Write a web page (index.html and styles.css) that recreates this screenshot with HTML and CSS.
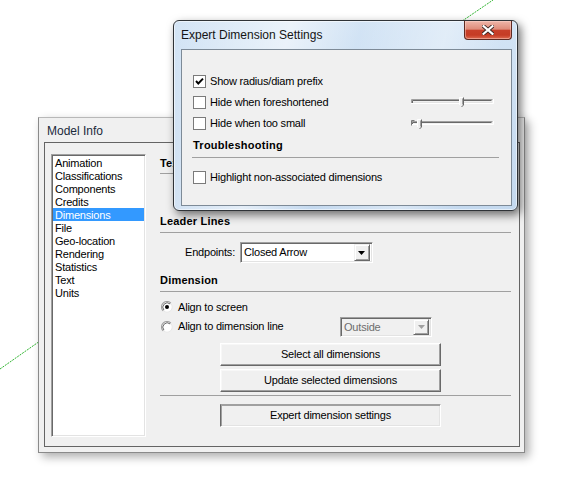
FILE: index.html
```html
<!DOCTYPE html>
<html>
<head>
<meta charset="utf-8">
<title>Expert Dimension Settings</title>
<link rel="stylesheet" href="styles.css">
</head>
<body>
<div class="desk">
  <svg class="lines" width="566" height="480" viewBox="0 0 566 480">
    <line x1="0" y1="369" x2="80" y2="313" stroke="#2fb52f" stroke-width="1" stroke-dasharray="2 1"/>
    <line x1="430" y1="43" x2="493" y2="0" stroke="#2fb52f" stroke-width="1" stroke-dasharray="2 1"/>
  </svg>

  <div class="win-model">
    <div class="model-title">Model Info</div>
    <div class="panel">
      <div class="list">
        <div class="item">Animation</div>
        <div class="item">Classifications</div>
        <div class="item">Components</div>
        <div class="item">Credits</div>
        <div class="item selected">Dimensions</div>
        <div class="item">File</div>
        <div class="item">Geo-location</div>
        <div class="item">Rendering</div>
        <div class="item">Statistics</div>
        <div class="item">Text</div>
        <div class="item">Units</div>
      </div>
      <div class="col">
        <div class="hd hd-text">Text</div>
        <div class="sep sep-text"></div>
        <div class="hd hd-leader">Leader Lines</div>
        <div class="sep sep-leader"></div>
        <div class="endpoints">
          <span class="ep-label">Endpoints:</span>
          <div class="combo">
            <span class="combo-text">Closed Arrow</span>
            <span class="combo-btn">
              <svg width="7" height="4" viewBox="0 0 7 4"><path d="M0 0H7L3.5 4Z" fill="#000"/></svg>
            </span>
          </div>
        </div>
        <div class="hd hd-dim">Dimension</div>
        <div class="sep sep-dim"></div>
        <div class="radio-row r1">
          <svg class="radio" width="12" height="12" viewBox="0 0 12 12">
            <circle cx="6" cy="6" r="5.2" fill="#fff" stroke="#e8e8e8"/>
            <path d="M2.1 9.9A5.5 5.5 0 0 1 9.9 2.1" fill="none" stroke="#a0a0a0" stroke-width="1.1"/>
            <path d="M2.9 9.1A4.4 4.4 0 0 1 9.1 2.9" fill="none" stroke="#6a6a6a" stroke-width="1"/>
            <circle cx="6" cy="6" r="2" fill="#000"/>
          </svg>
          <span class="rlabel">Align to screen</span>
        </div>
        <div class="radio-row r2">
          <svg class="radio" width="12" height="12" viewBox="0 0 12 12">
            <circle cx="6" cy="6" r="5.2" fill="#fff" stroke="#e8e8e8"/>
            <path d="M2.1 9.9A5.5 5.5 0 0 1 9.9 2.1" fill="none" stroke="#a0a0a0" stroke-width="1.1"/>
            <path d="M2.9 9.1A4.4 4.4 0 0 1 9.1 2.9" fill="none" stroke="#6a6a6a" stroke-width="1"/>
          </svg>
          <span class="rlabel">Align to dimension line</span>
          <div class="combo combo-dis">
            <span class="combo-text">Outside</span>
            <span class="combo-btn">
              <svg width="7" height="4" viewBox="0 0 7 4"><path d="M0 0H7L3.5 4Z" fill="#a0a0a0"/></svg>
            </span>
          </div>
        </div>
        <div class="btn b1">Select all dimensions</div>
        <div class="btn b2">Update selected dimensions</div>
        <div class="sep sep-btn"></div>
        <div class="btn btn-pressed b3">Expert dimension settings</div>
      </div>
    </div>
  </div>

  <div class="aero">
    <div class="aero-bar">
      <span class="aero-title">Expert Dimension Settings</span>
      <span class="close">
        <svg width="12" height="10" viewBox="0 0 12 10">
          <path d="M1.5 1.2L10.5 8.8M10.5 1.2L1.5 8.8" stroke="#3b2622" stroke-width="4" stroke-linecap="square"/>
          <path d="M1.5 1.2L10.5 8.8M10.5 1.2L1.5 8.8" stroke="#fff" stroke-width="2.2" stroke-linecap="square"/>
        </svg>
      </span>
    </div>
    <div class="client">
      <div class="crow c1">
        <span class="chk">
          <svg width="11" height="11" viewBox="0 0 11 11"><path d="M2 5L4.3 7.5L9 2.6" fill="none" stroke="#000" stroke-width="1.9"/></svg>
        </span>
        <span class="clabel">Show radius/diam prefix</span>
      </div>
      <div class="crow c2">
        <span class="chk"></span>
        <span class="clabel">Hide when foreshortened</span>
        <svg class="slider" width="84" height="13" viewBox="0 0 84 13">
          <path d="M1.5 8V3.5H82.5" fill="none" stroke="#a0a0a0"/>
          <path d="M2.5 7V4.5H81.5" fill="none" stroke="#696969"/>
          <path d="M1 7.5H83.5V3" fill="none" stroke="#fff"/>
          <path d="M3 6.5H82" stroke="#e3e3e3"/>
          <path d="M49.5 1.5H53.5V9L51.5 11L49.5 9Z" fill="#f0f0f0"/>
          <path d="M49.5 9V1.5H53" fill="none" stroke="#fff"/>
          <path d="M53.5 1.5V9L51.5 11" fill="none" stroke="#696969"/>
          <path d="M52.5 2.5V8.5" stroke="#a0a0a0"/>
        </svg>
      </div>
      <div class="crow c3">
        <span class="chk"></span>
        <span class="clabel">Hide when too small</span>
        <svg class="slider" width="84" height="13" viewBox="0 0 84 13">
          <path d="M1.5 8V4.5H82.5" fill="none" stroke="#a0a0a0"/>
          <path d="M2.5 7V5.5H81.5" fill="none" stroke="#696969"/>
          <path d="M1 7.5H83.5V4" fill="none" stroke="#fff"/>
          <path d="M4.5 3.5H1.5V8.5" fill="none" stroke="#7a7a7a"/>
          <path d="M7.5 2.5H11.5V10L9.5 12L7.5 10Z" fill="#f0f0f0"/>
          <path d="M7.5 10V2.5H11" fill="none" stroke="#fff"/>
          <path d="M11.5 2.5V10L9.5 12" fill="none" stroke="#696969"/>
          <path d="M10.5 3.5V9.5" stroke="#a0a0a0"/>
        </svg>
      </div>
      <div class="chd">Troubleshooting</div>
      <div class="csep"></div>
      <div class="crow c4">
        <span class="chk"></span>
        <span class="clabel">Highlight non-associated dimensions</span>
      </div>
    </div>
  </div>
</div>
</body>
</html>
```

FILE: styles.css
```css
* { box-sizing: border-box; }
html, body { margin: 0; padding: 0; background: #fff; }
body {
  font: 11px/13px "Liberation Sans", Arial, sans-serif;
  letter-spacing: -0.2px;
  color: #000;
}
.desk {
  position: relative;
  width: 566px;
  height: 480px;
  overflow: hidden;
  background: #fff;
}
.lines { position: absolute; left: 0; top: 0; }

/* ---------- Model Info window ---------- */
.win-model {
  position: absolute;
  left: 38px;
  top: 117px;
  width: 487px;
  height: 336px;
  background: #f0f0f0;
  border: 1px solid #8a8a8a;
  border-top-color: #b8b8b8;
  box-shadow: 4px 4px 9px rgba(0,0,0,0.32);
  display: flex;
  flex-direction: column;
}
.model-title {
  height: 24px;
  line-height: 27px;
  padding-left: 8px;
  font-size: 12px;
  letter-spacing: 0;
  color: #1b2a3c;
}
.panel {
  margin-left: 5px;
  width: 476px;
  height: 305px;
  border: 1px solid #646464;
  display: flex;
  align-items: flex-start;
  padding: 11px 0 0 6px;
}
.list {
  width: 95px;
  height: 283px;
  background: #fff;
  border-top: 1px solid #a0a0a0;
  border-left: 1px solid #a0a0a0;
  border-right: 1px solid #fff;
  border-bottom: 1px solid #fff;
  box-shadow: inset 1px 1px 0 #696969, inset -1px -1px 0 #e3e3e3;
  padding: 1px 1px 0 1px;
}
.item {
  height: 13px;
  line-height: 14px;
  padding-left: 2px;
  white-space: nowrap;
}
.item.selected { background: #3399ff; color: #fff; }

.col {
  margin-left: 14px;
  width: 351px;
  display: flex;
  flex-direction: column;
}
.hd {
  height: 14px;
  line-height: 14px;
  font-weight: bold;
  letter-spacing: 0.2px;
}
.sep {
  height: 1px;
  background: #a0a0a0;
}
.hd-text { margin-top: 2px; }
.sep-text { margin-top: 3px; }
.hd-leader { margin-top: 40px; }
.sep-leader { margin-top: 4px; }
.endpoints {
  margin-top: 9px;
  height: 21px;
  display: flex;
  align-items: center;
  padding-left: 25px;
}
.ep-label { margin-right: 5px; }
.combo {
  width: 133px;
  height: 21px;
  background: #fff;
  border-top: 1px solid #a0a0a0;
  border-left: 1px solid #a0a0a0;
  border-right: 1px solid #fff;
  border-bottom: 1px solid #fff;
  box-shadow: inset 1px 1px 0 #696969, inset -1px -1px 0 #e3e3e3;
  display: flex;
  align-items: center;
  padding: 2px 2px 2px 3px;
}
.combo-text { flex: 1; white-space: nowrap; }
.combo-btn {
  width: 16px;
  height: 17px;
  background: #f0f0f0;
  border-top: 1px solid #f0f0f0;
  border-left: 1px solid #f0f0f0;
  border-right: 1px solid #696969;
  border-bottom: 1px solid #696969;
  box-shadow: inset 1px 1px 0 #fff, inset -1px -1px 0 #a0a0a0;
  display: flex;
  align-items: center;
  justify-content: center;
}
.hd-dim { margin-top: 10px; }
.sep-dim { margin-top: 4px; }
.radio-row {
  display: flex;
  align-items: center;
  padding-left: 1px;
}
.radio { flex: none; }
.rlabel { margin-left: 5px; white-space: nowrap; }
.r1 { margin-top: 8px; height: 14px; }
.r2 { margin-top: 3px; height: 20px; padding-right: 79px; }
.r2 .rlabel { position: relative; top: -1px; }
.combo-dis {
  margin-left: auto;
  width: 92px;
  height: 20px;
  background: #f0f0f0;
  color: #6d6d6d;
}
.combo-dis .combo-btn { height: 16px; }
.btn {
  margin-left: 60px;
  width: 221px;
  height: 23px;
  line-height: 21px;
  text-align: center;
  background: #f0f0f0;
  border-top: 1px solid #fff;
  border-left: 1px solid #fff;
  border-right: 1px solid #696969;
  border-bottom: 1px solid #696969;
  box-shadow: inset -1px -1px 0 #a0a0a0, inset 1px 1px 0 #f7f7f7;
  white-space: nowrap;
}
.btn-pressed {
  border-top: 1px solid #a0a0a0;
  border-left: 1px solid #696969;
  border-right: 1px solid #fff;
  border-bottom: 1px solid #fff;
  box-shadow: inset 1px 1px 0 #a0a0a0, inset -1px -1px 0 #e3e3e3;
}
.b1 { margin-top: 6px; }
.b2 { margin-top: 3px; }
.sep-btn { margin-top: 3px; }
.b3 { margin-top: 8px; }

/* ---------- Aero dialog ---------- */
.aero {
  position: absolute;
  left: 173px;
  top: 20px;
  width: 345px;
  height: 191px;
  border: 1px solid #2f3337;
  border-radius: 6px;
  background:
    linear-gradient(105deg, rgba(255,255,255,0) 0%, rgba(255,255,255,0.55) 30%, rgba(255,255,255,0) 48%, rgba(255,255,255,0.35) 70%, rgba(255,255,255,0) 85%),
    linear-gradient(#d3e4f5, #c4d9ef);
  box-shadow: inset 0 0 0 1px rgba(255,255,255,0.55), 3px 4px 10px rgba(0,0,0,0.55);
  padding: 0 5px 4px 7px;
  display: flex;
  flex-direction: column;
}
.aero-bar {
  height: 28px;
  display: flex;
  align-items: flex-start;
}
.aero-title {
  font-size: 12px;
  letter-spacing: 0;
  line-height: 15px;
  margin-top: 7px;
  color: #141414;
  white-space: nowrap;
}
.close {
  margin-left: auto;
  margin-top: 0;
  width: 48px;
  height: 19px;
  border: 1px solid #5e2a22;
  border-top: none;
  border-radius: 0 0 4px 4px;
  background: linear-gradient(#efb6a9 0%, #df8c7a 45%, #c8402a 52%, #c53c25 78%, #dd6a50 100%);
  box-shadow: inset 0 0 0 1px rgba(255,220,210,0.45);
  display: flex;
  align-items: center;
  justify-content: center;
}
.client {
  width: 331px;
  height: 157px;
  background: #f0f0f0;
  border: 1px solid #7d8a97;
  padding: 25px 0 0 11px;
  display: flex;
  flex-direction: column;
}
.crow {
  height: 13px;
  display: flex;
  align-items: center;
  padding-right: 17px;
}
.chk {
  flex: none;
  width: 13px;
  height: 13px;
  background: #fff;
  border: 1px solid #7a7a7a;
  display: flex;
  align-items: center;
  justify-content: center;
}
.clabel { margin-left: 4px; white-space: nowrap; }
.slider { margin-left: auto; flex: none; }
.c2 { margin-top: 8px; }
.c3 { margin-top: 8px; }
.chd {
  margin-top: 8px;
  height: 14px;
  line-height: 14px;
  font-weight: bold;
  letter-spacing: 0.25px;
}
.csep {
  margin-top: 5px;
  margin-left: -1px;
  width: 307px;
  height: 1px;
  background: #a0a0a0;
}
.c4 { margin-top: 13px; }
```
